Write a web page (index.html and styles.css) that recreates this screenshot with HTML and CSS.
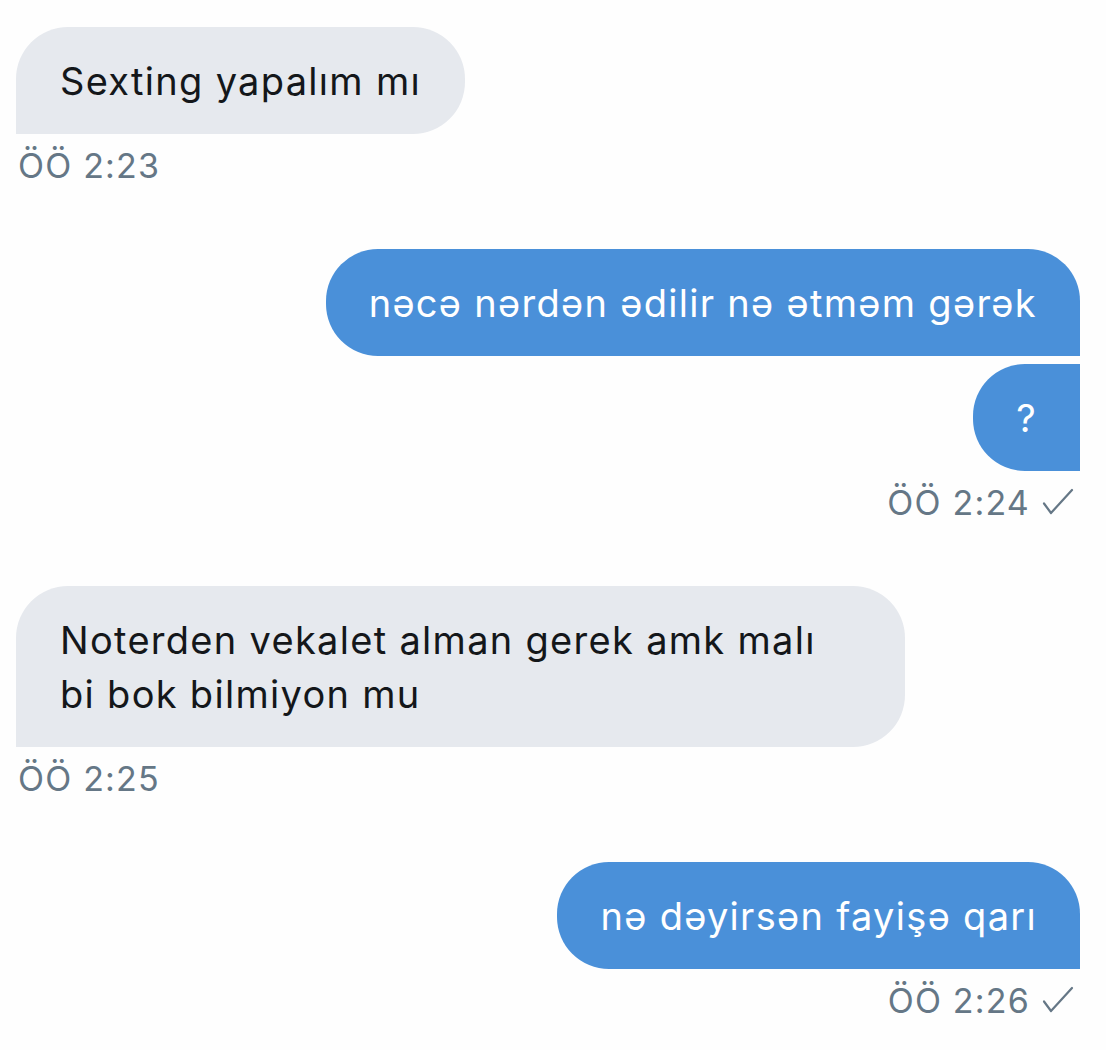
FILE: index.html
```html
<!DOCTYPE html>
<html lang="tr">
<head>
<meta charset="utf-8">
<title>Mesajlar</title>
<link rel="stylesheet" href="styles.css">
</head>
<body>
<main class="chat">
  <section class="group received">
    <div class="bubble only">Sexting yapalım mı</div>
    <div class="meta">ÖÖ 2:23</div>
  </section>

  <section class="group sent">
    <div class="bubble first">nəcə nərdən ədilir nə ətməm gərək</div>
    <div class="bubble last">?</div>
    <div class="meta">ÖÖ 2:24
      <svg class="check" viewBox="0 0 32 28" width="32" height="28" aria-hidden="true"><path d="M2 15.5 L9 25 L30 2" fill="none" stroke="currentColor" stroke-width="2.2" stroke-linecap="round" stroke-linejoin="round"/></svg>
    </div>
  </section>

  <section class="group received">
    <div class="bubble only full">Noterden vekalet alman gerek amk malı<br>bi bok bilmiyon mu</div>
    <div class="meta">ÖÖ 2:25</div>
  </section>

  <section class="group sent">
    <div class="bubble only">nə dəyirsən fayişə qarı</div>
    <div class="meta">ÖÖ 2:26
      <svg class="check" viewBox="0 0 32 28" width="32" height="28" aria-hidden="true"><path d="M2 15.5 L9 25 L30 2" fill="none" stroke="currentColor" stroke-width="2.2" stroke-linecap="round" stroke-linejoin="round"/></svg>
    </div>
  </section>
</main>
</body>
</html>
```

FILE: styles.css
```css
html, body {
  margin: 0;
  padding: 0;
  background: #fefefe;
}

body {
  font-family: Inter, "Noto Sans", "Liberation Sans", sans-serif;
  color: #14171a;
}

.chat {
  display: flex;
  flex-direction: column;
  padding: 27px 26px 0 16px;
}

.group {
  display: flex;
  flex-direction: column;
  gap: 8px;
  margin-bottom: 61px;
}

.group.received {
  align-items: flex-start;
}

.group.sent {
  align-items: flex-end;
}

.bubble {
  box-sizing: border-box;
  font-size: 38px;
  letter-spacing: 1.3px;
  line-height: 54px;
  padding: 26.5px 44px;
  border-radius: 52px;
  max-width: 889px;
}

.bubble.full {
  width: 889px;
}

.received .bubble {
  background: #e6e9ee;
  color: #14171a;
  border-bottom-left-radius: 0;
}

.sent .bubble {
  background: #4a90d9;
  color: #ffffff;
  padding-left: 43px;
  padding-right: 43px;
}

.sent .bubble.only,
.sent .bubble.first {
  border-bottom-right-radius: 0;
}

.sent .bubble.last {
  border-top-right-radius: 0;
  border-bottom-right-radius: 0;
}

.meta {
  display: flex;
  align-items: center;
  gap: 12px;
  margin-top: 2px;
  font-size: 34px;
  letter-spacing: 1.2px;
  line-height: 44px;
  color: #657786;
  padding-left: 2px;
}

.sent .meta {
  padding-right: 6px;
}

.check {
  display: block;
  margin-top: -2px;
}
```
